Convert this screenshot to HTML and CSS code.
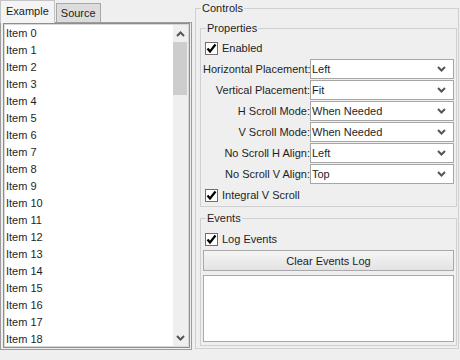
FILE: index.html
```html
<!DOCTYPE html>
<html lang="en">
<head>
  <meta charset="UTF-8" />
  <title>Scroll Pane Demo</title>
  <link rel="stylesheet" href="styles.css">
</head>
<body>
  <div class="window">
    <div class="tab-widget">
      <div class="tab-bar">
        <div class="tab active">Example</div>
        <div class="tab">Source</div>
      </div>
      <div class="tab-panel">
        <div class="list">
          <ul class="items" id="items"></ul>
          <div class="scrollbar">
            <div class="arrow">
              <svg width="9" height="6" viewBox="0 0 9 6"><path d="M1 5 L4.5 1.5 L8 5" fill="none" stroke="#555" stroke-width="2"/></svg>
            </div>
            <div class="track"><div class="thumb"></div></div>
            <div class="arrow">
              <svg width="9" height="6" viewBox="0 0 9 6"><path d="M1 1 L4.5 4.5 L8 1" fill="none" stroke="#555" stroke-width="2"/></svg>
            </div>
          </div>
        </div>
      </div>
    </div>

    <fieldset class="group controls">
      <legend>Controls</legend>

      <fieldset class="group properties">
        <legend>Properties</legend>
        <label class="check">
          <span class="box"><svg width="11" height="11" viewBox="0 0 11 11"><path d="M1.5 5.5 L4 8.5 L9.5 1.5" fill="none" stroke="#000" stroke-width="2.2"/></svg></span>
          Enabled
        </label>
        <div class="form">
          <span class="label">Horizontal Placement:</span><div class="combo">Left</div>
          <span class="label">Vertical Placement:</span><div class="combo">Fit</div>
          <span class="label">H Scroll Mode:</span><div class="combo">When Needed</div>
          <span class="label">V Scroll Mode:</span><div class="combo">When Needed</div>
          <span class="label">No Scroll H Align:</span><div class="combo">Left</div>
          <span class="label">No Scroll V Align:</span><div class="combo">Top</div>
        </div>
        <label class="check check-last">
          <span class="box"><svg width="11" height="11" viewBox="0 0 11 11"><path d="M1.5 5.5 L4 8.5 L9.5 1.5" fill="none" stroke="#000" stroke-width="2.2"/></svg></span>
          Integral V Scroll
        </label>
      </fieldset>

      <fieldset class="group events">
        <legend>Events</legend>
        <label class="check">
          <span class="box"><svg width="11" height="11" viewBox="0 0 11 11"><path d="M1.5 5.5 L4 8.5 L9.5 1.5" fill="none" stroke="#000" stroke-width="2.2"/></svg></span>
          Log Events
        </label>
        <button class="button">Clear Events Log</button>
        <div class="log"></div>
      </fieldset>
    </fieldset>
  </div>

  <script>
    const list = document.getElementById("items");
    for (let i = 0; i < 19; i++) {
      const li = document.createElement("li");
      li.textContent = "Item " + i;
      list.appendChild(li);
    }

    document.querySelectorAll(".combo").forEach(combo => {
      combo.insertAdjacentHTML("beforeend",
        '<svg class="chevron" width="9" height="6" viewBox="0 0 9 6"><path d="M1 1 L4.5 4.5 L8 1" fill="none" stroke="#555" stroke-width="2"/></svg>');
    });
  </script>
</body>
</html>
```

FILE: styles.css
```css
body {
  margin: 0;
  background-color: #efefef;
  font-family: "Liberation Sans", Arial, sans-serif;
  font-size: 11px;
  color: #1e1e1e;
}

.window {
  display: flex;
  align-items: flex-start;
  height: 360px;
}

/* left: tab widget with list */
.tab-widget {
  width: 192px;
  display: flex;
  flex-direction: column;
}

.tab-bar {
  height: 22px;
  display: flex;
  align-items: flex-end;
}

.tab {
  height: 19px;
  line-height: 18px;
  padding: 0 4px;
  box-sizing: border-box;
  background-color: #dcdcdc;
  border: 1px solid #a8a8a8;
  border-bottom: none;
  margin-left: 1px;
}

.tab.active {
  height: 23px;
  line-height: 21px;
  margin-left: 0;
  margin-bottom: -1px;
  padding: 0 5px;
  background-color: #f4f4f4;
  border-color: #c4c4c4;
  position: relative;
}

.tab-panel {
  height: 328px;
  box-sizing: border-box;
  border: 1px solid #9c9c9c;
  padding: 0 1px 1px 2px;
}

.list {
  height: 325px;
  box-sizing: border-box;
  border: 1px solid #8e8e8e;
  box-shadow: inset 0 0 0 1px #d8d8d8;
  background: #fff;
  display: flex;
  overflow: hidden;
}

.items {
  list-style: none;
  margin: 0;
  padding: 1px 0 0 2px;
  flex: 1;
}

.items li {
  height: 17px;
  line-height: 17px;
}

.scrollbar {
  width: 15px;
  margin: 1px 1px 1px 0;
  background-color: #efefef;
  display: flex;
  flex-direction: column;
}

.arrow {
  height: 17px;
  display: flex;
  align-items: center;
  justify-content: center;
}

.track {
  flex: 1;
}

.thumb {
  height: 53px;
  margin: 0 1px 0 0;
  background-color: #cdcdcd;
}

/* right: group boxes */
.group {
  margin: 0;
  border: 1px solid #d0d0d0;
  min-width: 0;
}

.group legend {
  line-height: 14px;
  padding: 0 1px;
}

.controls {
  width: 264px;
  height: 348px;
  box-sizing: border-box;
  margin: 1px 0 0 3px;
  padding: 6px 1px 2px 4px;
}

.controls > legend {
  margin-left: 1px;
}

.properties {
  padding: 6px 2px 4px 2px;
}

.properties > legend,
.events > legend {
  margin-left: 3px;
}

.events {
  margin-top: 4px;
  padding: 7px 2px 3px 2px;
}

.check {
  display: flex;
  align-items: center;
  height: 14px;
  gap: 4px;
  padding-left: 2px;
}

.check-last {
  margin-top: 4px;
}

.box {
  width: 13px;
  height: 13px;
  box-sizing: border-box;
  border: 1px solid #6e6e6e;
  background: #fff;
  display: flex;
  align-items: center;
  justify-content: center;
}

.form {
  display: grid;
  grid-template-columns: 107px 1fr;
  grid-auto-rows: 20px;
  row-gap: 1px;
  margin-top: 4px;
}

.label {
  text-align: right;
  line-height: 20px;
  white-space: nowrap;
}

.combo {
  display: flex;
  align-items: center;
  justify-content: space-between;
  box-sizing: border-box;
  border: 1px solid #a6a6a6;
  background: #fff;
  padding: 0 7px 0 1px;
}

.button {
  display: block;
  width: 100%;
  height: 21px;
  margin-top: 4px;
  box-sizing: border-box;
  border: 1px solid #a9a9a9;
  background: linear-gradient(#f5f5f5, #e3e3e3);
  font: inherit;
  color: inherit;
}

.log {
  height: 67px;
  margin-top: 4px;
  box-sizing: border-box;
  border: 1px solid #a9a9a9;
  background: #fff;
}
```
